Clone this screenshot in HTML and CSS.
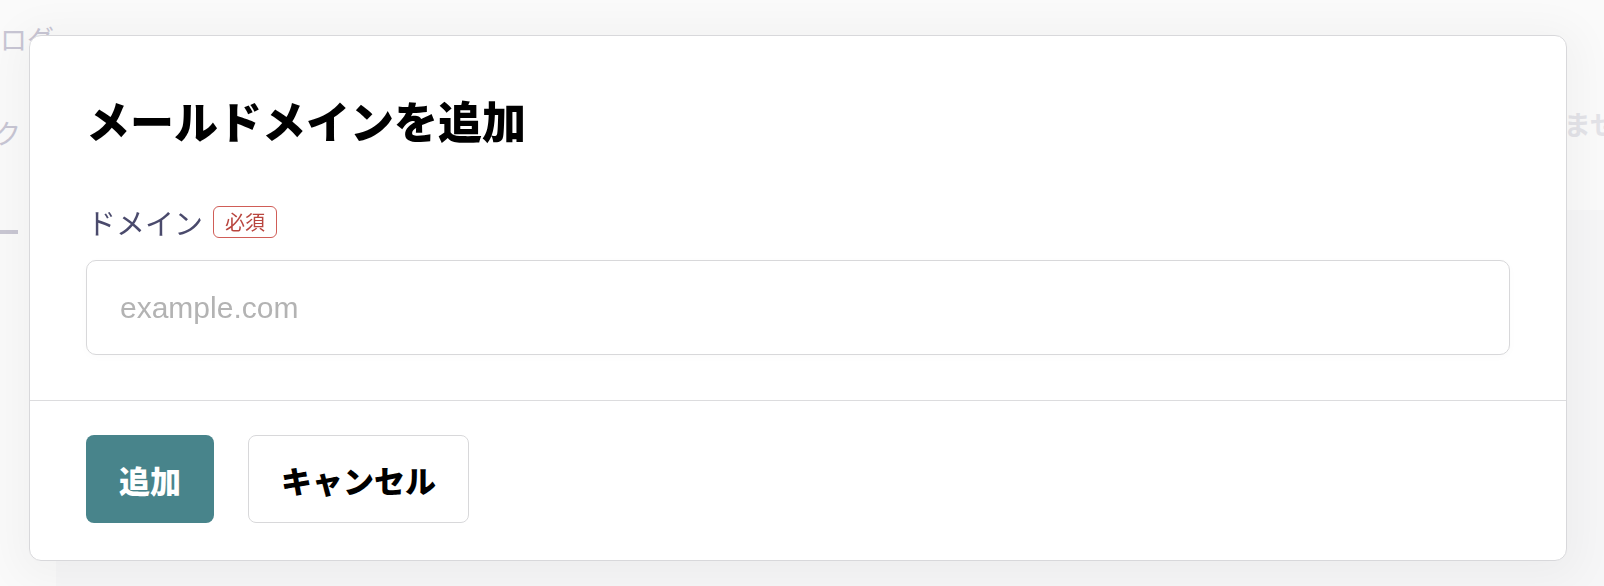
FILE: index.html
```html
<!DOCTYPE html>
<html lang="ja">
<head>
<meta charset="utf-8">
<title>メールドメインを追加</title>
<link rel="stylesheet" href="styles.css">
</head>
<body>
  <div class="page">
    <aside class="side">
      <div class="side-item side-top">ログ</div>
      <div class="side-item side-mid">ク</div>
      <div class="side-rule"></div>
    </aside>
    <main class="main">
      <div class="main-head">
        <span class="main-note">ドメインが登録されていません</span>
      </div>
      <div class="main-panel"></div>
    </main>
  </div>

  <div class="overlay">
    <section class="dialog" role="dialog" aria-labelledby="dlg-title">
      <div class="dialog-body">
        <h2 class="dialog-title" id="dlg-title">メールドメインを追加</h2>
        <div class="field-label">
          <label for="domain" class="label-text">ドメイン</label>
          <span class="badge">必須</span>
        </div>
        <input id="domain" class="text-input" type="text" placeholder="example.com">
      </div>
      <div class="dialog-footer">
        <button class="btn btn-primary" type="button">追加</button>
        <button class="btn btn-secondary" type="button">キャンセル</button>
      </div>
    </section>
  </div>
</body>
</html>
```

FILE: styles.css
```css
* { box-sizing: border-box; }

html, body {
  margin: 0;
  padding: 0;
  height: 100%;
}

body {
  background: #fafafa;
  font-family: "Noto Sans CJK JP", "Noto Sans", sans-serif;
  overflow: hidden;
}

/* ---------- background page (faded) ---------- */
.page {
  display: grid;
  grid-template-columns: 56px 1fr;
  height: 100%;
}

.side {
  display: flex;
  flex-direction: column;
  padding-top: 20px;
  overflow: hidden;
}

.side-item {
  font-size: 27px;
  line-height: 38px;
  color: #c8c6d4;
  white-space: nowrap;
}

.side-mid {
  margin-top: 56px;
  margin-left: -6px;
}

.side-rule {
  margin-top: 78px;
  width: 18px;
  height: 4px;
  background: #c9c7d3;
}

.main {
  display: flex;
  flex-direction: column;
  overflow: hidden;
}

.main-head {
  height: 210px;
  display: flex;
  justify-content: flex-end;
  align-items: flex-start;
  padding-top: 104px;
  margin-right: -40px;
}

.main-note {
  font-size: 27px;
  font-weight: 700;
  color: #e3e3e8;
  white-space: nowrap;
}

.main-panel {
  flex: 1;
  background: #f6f6f7;
}

/* ---------- overlay + dialog ---------- */
.overlay {
  position: fixed;
  inset: 0;
  padding: 35px 37px 0 29px;
}

.dialog {
  width: 1538px;
  height: 526px;
  background: #ffffff;
  border: 1.5px solid #d8d8db;
  border-radius: 12px;
  box-shadow: 0 6px 40px 14px rgba(0, 0, 0, 0.035);
  display: flex;
  flex-direction: column;
}

.dialog-body {
  padding: 58px 56px 45px 56px;
  border-bottom: 1.5px solid #dcdcde;
}

.dialog-title {
  margin: 0;
  font-size: 44px;
  line-height: 52px;
  font-weight: 900;
  color: #000000;
}

.field-label {
  display: flex;
  align-items: center;
  gap: 10px;
  margin-top: 56px;
  height: 40px;
}

.label-text {
  font-size: 29px;
  line-height: 40px;
  color: #4a4a6c;
  padding-left: 1px;
}

.badge {
  display: inline-flex;
  align-items: center;
  justify-content: center;
  width: 64px;
  height: 32px;
  border: 1.5px solid #d05d57;
  border-radius: 6px;
  font-size: 20px;
  line-height: 1;
  color: #b9463f;
}

.text-input {
  display: block;
  width: 100%;
  height: 95px;
  margin-top: 18px;
  padding: 0 33px;
  border: 1.5px solid #d8d8da;
  border-radius: 10px;
  background: #ffffff;
  box-shadow: 0 2px 10px rgba(0, 0, 0, 0.02);
  font-family: "Liberation Sans", Arial, sans-serif;
  font-size: 30px;
  color: #222;
  outline: none;
}

.text-input::placeholder {
  color: #b3b3b3;
}

.dialog-footer {
  display: flex;
  gap: 34px;
  padding: 34px 56px 0 56px;
}

.btn {
  height: 88px;
  padding: 0;
  border-radius: 8px;
  font-family: "Noto Sans CJK JP", "Noto Sans", sans-serif;
  font-size: 31px;
  font-weight: 900;
  cursor: pointer;
}

.btn-primary {
  width: 128px;
  background: #48848b;
  border: none;
  color: #ffffff;
}

.btn-secondary {
  width: 221px;
  background: #ffffff;
  border: 1.5px solid #d8d8da;
  color: #000000;
}
```
